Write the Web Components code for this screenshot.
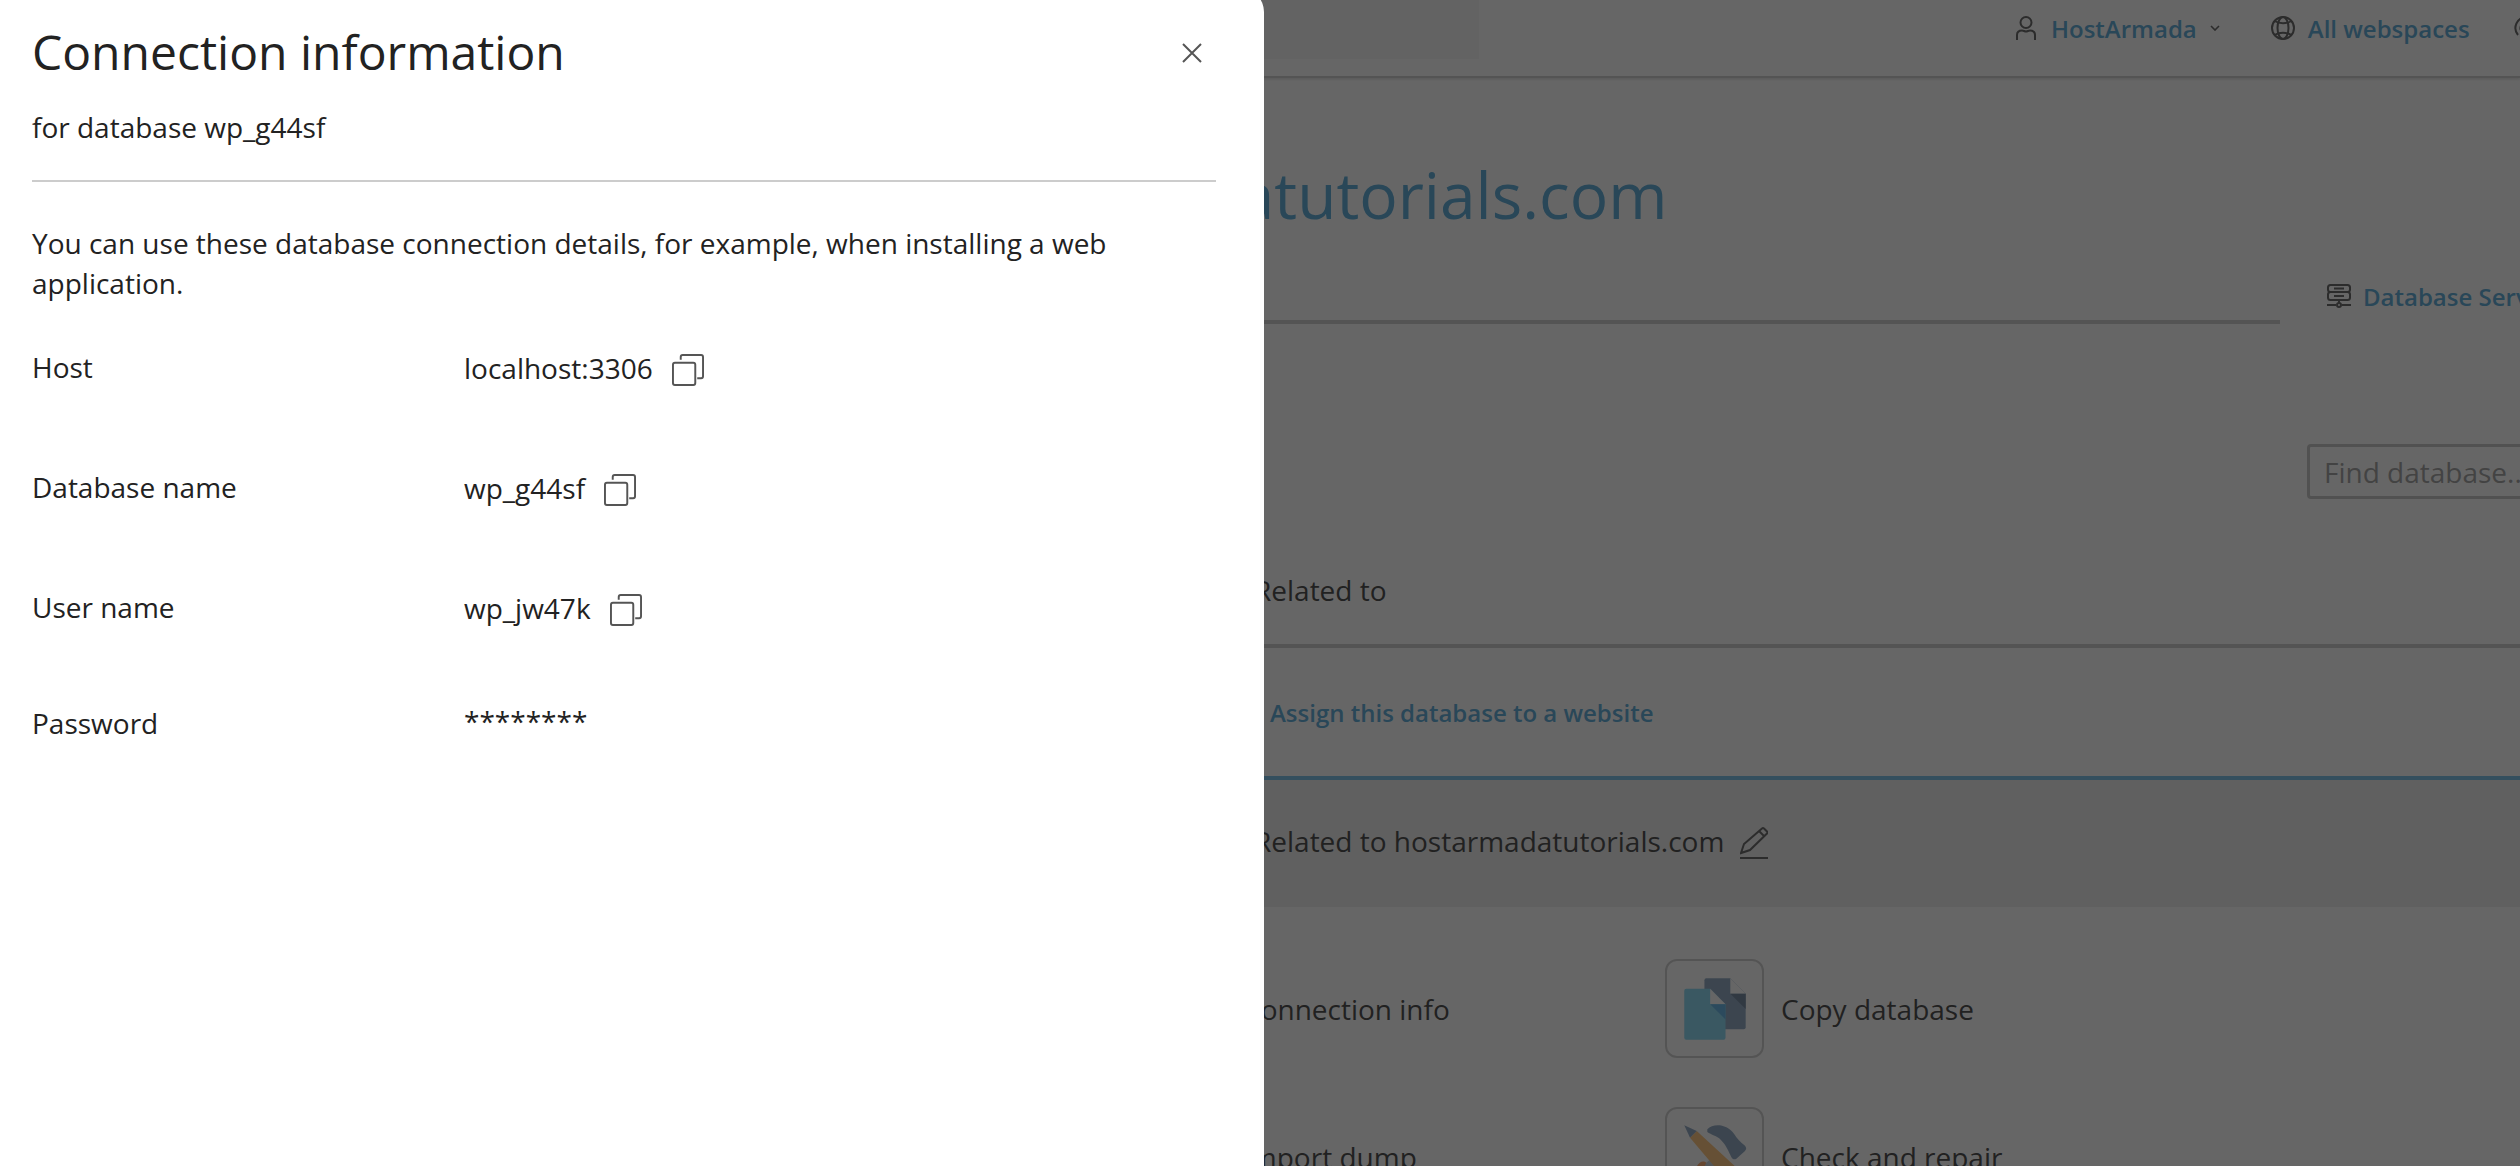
<!DOCTYPE html>
<html>
<head>
<meta charset="utf-8">
<title>Connection information</title>
<style>
  html, body { margin: 0; height: 100%; overflow: hidden; }
  body { font-family: "Open Sans", "Liberation Sans", sans-serif; color: #222; font-size: 28px; }
</style>
</head>
<body>
<app-shell>
  <top-bar>
    <top-link caret>
      <svg slot="icon" style="margin-right:2px" width="20" height="24" viewBox="0 0 20 24" fill="none" stroke="#444" stroke-width="2"><circle cx="10" cy="6.500" r="5.500"/><path d="M1 24v-5c0-3 2-4.500 5-4.500 1.500 0 2.500 1 4 1s2.500-1 4-1c3 0 5 1.500 5 4.500v5"/></svg>
      HostArmada
    </top-link>
    <top-link>
      <svg slot="icon" width="24" height="24" viewBox="0 0 24 24" fill="none" stroke="#444" stroke-width="2"><circle cx="12" cy="12" r="11"/><ellipse cx="12" cy="12" rx="5.500" ry="11"/><path d="M3.500 5c5 3 12 3 17 0M3.500 19c5-3 12-3 17 0"/></svg>
      All webspaces
    </top-link>
    <svg class="help" width="24" height="24" viewBox="0 0 24 24" fill="none" stroke="#444" stroke-width="2"><path d="M12 1a11 11 0 0 0-8 18"/><path d="M12 6a6 6 0 0 0-4 10"/></svg>
  </top-bar>

  <site-title>hostarmadatutorials.com</site-title>

  <tab-strip>
    <svg slot="icon" width="24" height="24" viewBox="0 0 24 24" fill="none" stroke="#444" stroke-width="2"><rect x="1" y="1" width="22" height="7" rx="2.500"/><rect x="1" y="8" width="22" height="8" rx="2.500"/><path d="M7 4.500h10M7 12h10M12 16v4M0 21h9M15 21h9"/><circle cx="12" cy="21" r="2"/></svg>
    Database Servers
  </tab-strip>

  <find-box placeholder="Find database..."></find-box>

  <related-block>
    <span slot="head">Related to</span>
    <span slot="link">Assign this database to a website</span>
    <span slot="value">Related to hostarmadatutorials.com</span>
  </related-block>

  <tile-grid>
    <action-tile label="Connection info"></action-tile>
    <action-tile label="Copy database">
      <svg width="99" height="99" viewBox="0 0 99 99">
        <path d="M41 18h25l16 16v35a2 2 0 0 1-2 2H41a2 2 0 0 1-2-2V20a2 2 0 0 1 2-2z" fill="#7996b6"/>
        <path d="M66 18l16 16H66z" fill="#ffffff"/>
        <path d="M66 34h16v16z" fill="#566f8a"/>
        <path d="M20 29h25l16 16v35a2 2 0 0 1-2 2H20a2 2 0 0 1-2-2V31a2 2 0 0 1 2-2z" fill="#72d0f0"/>
        <path d="M45 29l16 16H45z" fill="#ffffff"/>
        <path d="M45 45h16v16z" fill="#46a6e0"/>
      </svg>
    </action-tile>
    <action-tile label="Import dump"></action-tile>
    <action-tile label="Check and repair">
      <svg width="99" height="99" viewBox="0 0 99 99">
        <path d="M42 21C48 15 62 15 70 26C73 31 76 34 81 38C83 40 83 42 81 44L72 52C70 53 68 52 67 50C64 44 62 38 56 32C52 28 46 27 42 24Z" fill="#7996b6"/>
        <path d="M34 62l14-12 6 6-14 12z" fill="#c0ccd6"/>
        <path d="M31 60C33 55 38 53 41 56L38 62Z" fill="#ff9a55"/>
        <path d="M24 30l7-7 50 46-12 14z" fill="#ffb860"/>
        <path d="M18 17l13 6-7 7z" fill="#7996b6"/>
      </svg>
    </action-tile>
  </tile-grid>

  <side-drawer slot="drawer">
    <span slot="heading">Connection information</span>
    <span slot="subtitle">for database wp_g44sf</span>
    <p>You can use these database connection details, for example, when installing a web application.</p>
    <info-row label="Host" copy>localhost:3306</info-row>
    <info-row label="Database name" copy>wp_g44sf</info-row>
    <info-row label="User name" copy compact>wp_jw47k</info-row>
    <info-row label="Password" plain>********</info-row>
  </side-drawer>
</app-shell>

<script>
function define(name, css, html) {
  customElements.define(name, class extends HTMLElement {
    constructor() {
      super();
      const shadowRoot = this.attachShadow({ mode: "open" });
      shadowRoot.innerHTML = `<style>${css}</style>${typeof html === "function" ? html(this) : html}`;
    }
  });
}

define("app-shell", `
  :host { display: block; position: relative; width: 2520px; height: 1166px; overflow: hidden; background: #fff; }
  .overlay { position: absolute; inset: 0; background: rgba(34, 34, 34, .69); }
`, `<slot></slot><div class="overlay"></div><slot name="drawer"></slot>`);

define("top-bar", `
  :host { display: flex; height: 76px; border-bottom: 2px solid #c6c6c6; box-shadow: 0 1px 3px rgba(0,0,0,.2); white-space: nowrap; overflow: hidden; }
  .search { width: 1479px; height: 59px; background: #f5f5f5; flex: none; margin-right: 537px; }
  .links { display: flex; height: 56px; align-items: center; gap: 51px; }
  ::slotted(svg.help) { margin-left: -7px; flex: none; }
`, `<div class="search"></div><div class="links"><slot></slot></div>`);

define("top-link", `
  :host { display: flex; align-items: center; gap: 13px; font-size: 24px; font-weight: 600; color: #3a9ad0; }
  .icon { display: flex; }
  svg { display: block; }
`, (el) => `<span class="icon"><slot name="icon"></slot></span><slot></slot>${el.hasAttribute("caret")
  ? `<svg width="10" height="6" viewBox="0 0 10 6" fill="none" stroke="#444" stroke-width="1.600"><path d="M1 1l4 4 4-4"/></svg>` : ""}`);

define("site-title", `
  :host { display: block; padding: 79px 0 0 912px; height: 76px; font-size: 64px; line-height: 76px; color: #3a9ad0; white-space: nowrap; }
`, `<slot></slot>`);

define("tab-strip", `
  :host { display: flex; height: 91px; font-size: 24px; font-weight: 600; color: #3a9ad0; white-space: nowrap; }
  .line { width: 2280px; flex: none; border-bottom: 4px solid #c6c6c6; box-sizing: border-box; }
  .tab { display: flex; align-items: center; gap: 12px; height: 40px; margin: 43px 0 0 47px; }
`, `<div class="line"></div><div class="tab"><slot name="icon"></slot><slot></slot></div>`);

define("find-box", `
  :host { display: block; padding: 120px 0 0 2307px; }
  .box { box-sizing: border-box; width: 300px; height: 55px; border: 3px solid #bbb; border-radius: 4px; padding-left: 14px; line-height: 50px; color: #8f8f8f; white-space: nowrap; }
`, (el) => `<div class="box">${el.getAttribute("placeholder")}</div>`);

define("related-block", `
  :host { display: block; white-space: nowrap; line-height: 40px; }
  .head { box-sizing: border-box; height: 149px; padding: 71px 0 0 1254px; border-bottom: 4px solid #c6c6c6; }
  .link { box-sizing: border-box; height: 132px; padding: 45px 0 0 1270px; border-bottom: 4px solid #5fb4e6; font-size: 24px; font-weight: 600; color: #3a9ad0; }
  .value { box-sizing: border-box; height: 127px; padding: 41px 0 0 1254px; background: #ebebeb; display: flex; align-items: flex-start; gap: 16px; }
  svg { margin-top: 6px; flex: none; }
`, `
  <div class="head"><slot name="head"></slot></div>
  <div class="link"><slot name="link"></slot></div>
  <div class="value"><slot name="value"></slot>
    <svg width="28" height="34" viewBox="0 0 28 34" fill="none" stroke="#444" stroke-width="2"><path d="M1 26L4 17L22 1.500Q23 .6 24 1.500L27 4.500Q28 5.500 27 6.500L10 23Z"/><path d="M19 4l5 5"/><path d="M0 31h28"/></svg>
  </div>`);

define("tile-grid", `
  :host { display: grid; grid-template-columns: 538px auto; row-gap: 49px; padding: 52px 0 0 1127px; }
`, `<slot></slot>`);

define("action-tile", `
  :host { display: flex; align-items: center; gap: 17px; white-space: nowrap; }
  .tile { box-sizing: border-box; width: 99px; height: 99px; border: 2px solid #c6c6c6; border-radius: 12px; display: flex; align-items: center; justify-content: center; flex: none; }
  .label { margin-top: 1px; }
`, (el) => `<div class="tile"><slot></slot></div><span class="label">${el.getAttribute("label")}</span>`);

define("side-drawer", `
  :host { display: block; position: absolute; left: 0; top: -12px; box-sizing: border-box; width: 1264px; height: 1178px; background: #fff; border-radius: 0 24px 0 0; padding: 32px 48px 0 32px; color: #222; }
  .title-row { display: flex; align-items: center; justify-content: space-between; height: 64px; }
  h2 { margin: 0; font-size: 48px; font-weight: 400; line-height: 64px; white-space: nowrap; }
  svg { margin: 1px 14px 0 0; }
  .subtitle { margin-top: 23px; line-height: 40px; }
  hr { border: 0; height: 2px; background: #ccc; margin: 33px 0 41px; }
  ::slotted(p) { margin: 0 0 44px; line-height: 40px; }
`, `
  <div class="title-row">
    <h2><slot name="heading"></slot></h2>
    <svg width="20" height="20" viewBox="0 0 20 20" fill="none" stroke="#555" stroke-width="2"><path d="M1 1l18 18M19 1L1 19"/></svg>
  </div>
  <div class="subtitle"><slot name="subtitle"></slot></div>
  <hr>
  <slot></slot>`);

define("info-row", `
  :host { display: grid; grid-template-columns: 432px auto; height: 120px; line-height: 40px; }
  :host([compact]) { height: 116px; }
  .value { display: flex; align-items: flex-start; gap: 19px; padding-top: 1px; }
  :host([plain]) .value { padding-top: 0; margin-top: -2px; }
  svg { margin-top: 6px; flex: none; }
`, (el) => `
  <span>${el.getAttribute("label")}</span>
  <div class="value"><slot></slot>${el.hasAttribute("copy")
    ? `<svg width="32" height="32" viewBox="0 0 33 33" fill="none" stroke="#555" stroke-width="2"><rect x="1" y="9" width="23" height="23" rx="2"/><path d="M9 6V3a2 2 0 0 1 2-2h19a2 2 0 0 1 2 2v20a2 2 0 0 1-2 2h-4"/></svg>` : ""}</div>`);
</script>
</body>
</html>
